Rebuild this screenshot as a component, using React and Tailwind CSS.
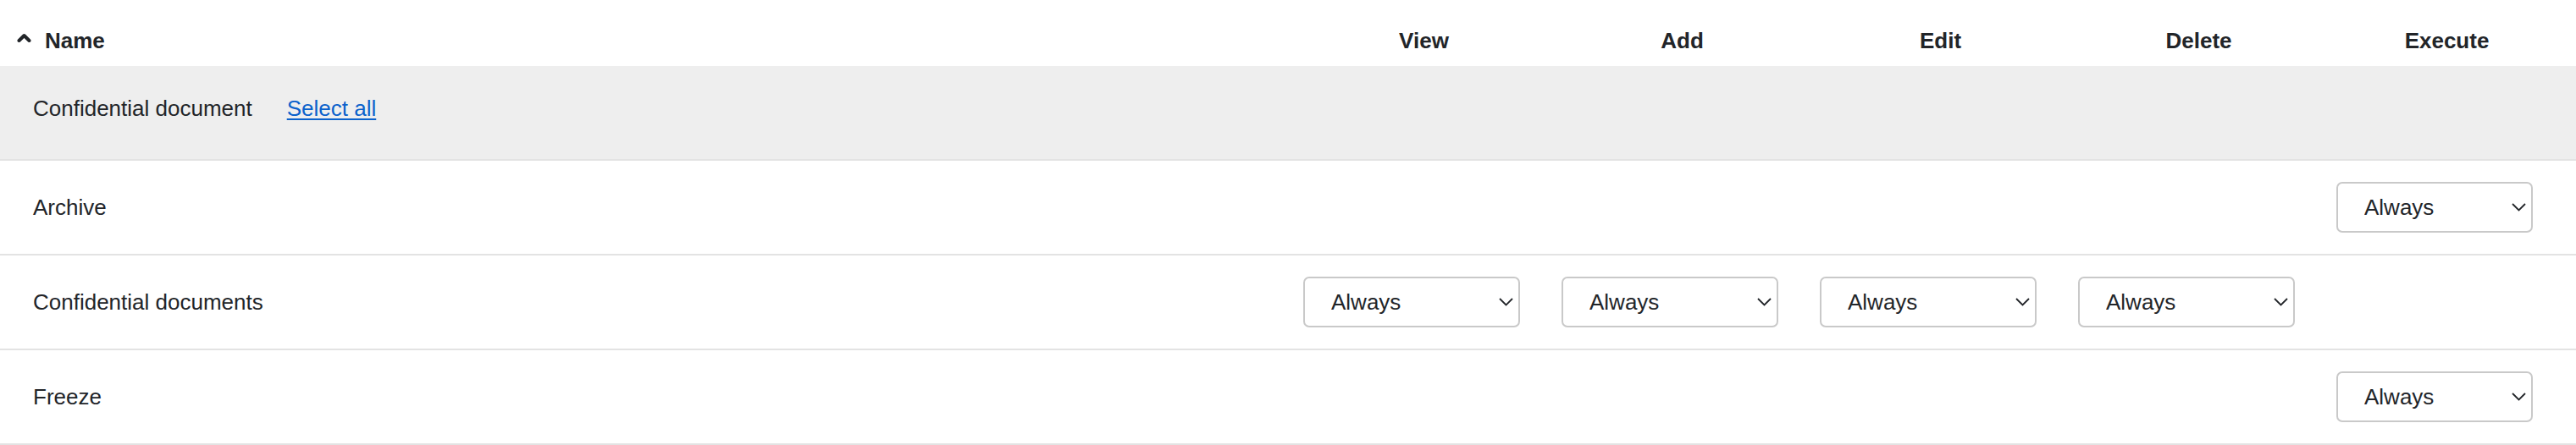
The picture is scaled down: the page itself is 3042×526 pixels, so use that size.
import { useState } from 'react';

const COLS = ['View', 'Add', 'Edit', 'Delete', 'Execute'];

const rows = [
  { name: 'Archive', perms: { Execute: 'Always' } },
  { name: 'Confidential documents', perms: { View: 'Always', Add: 'Always', Edit: 'Always', Delete: 'Always' } },
  { name: 'Freeze', perms: { Execute: 'Always' } },
];

const SortCaret = () => (
  <svg width="17" height="11" viewBox="0 0 17 11" className="mt-[6px] shrink-0">
    <polyline points="2.5,9 8.5,3 14.5,9" fill="none" stroke="#222529" strokeWidth="4" strokeLinecap="round" strokeLinejoin="round" />
  </svg>
);

const PermSelect = ({ value, wide }) => {
  const [val, setVal] = useState(value);
  return (
    <div className={`relative ml-[10px] h-[60px] ${wide ? 'w-[256px]' : 'w-[232px]'}`}>
      <select
        value={val}
        onChange={(e) => setVal(e.target.value)}
        className="h-full w-full appearance-none rounded-[7px] border-2 border-[#c9c9c9] bg-white pl-[31px] text-[26px] text-[#222529] outline-none"
      >
        <option>Always</option>
        <option>Never</option>
        <option>When owner</option>
      </select>
      <svg width="17" height="10" viewBox="0 0 17 10" className="pointer-events-none absolute right-[8px] top-[25px]">
        <polyline points="1,1 8.5,8.5 16,1" fill="none" stroke="#222529" strokeWidth="1.8" />
      </svg>
    </div>
  );
};

const gridCols = 'grid grid-cols-[1529px_305px_305px_305px_305px_281px_1fr]';

export default function App() {
  return (
    <div className="w-[3042px] bg-white text-[26px] leading-[30px] text-[#222529]" style={{ fontFamily: '"Liberation Sans", Arial, sans-serif' }}>
      {/* header */}
      <div className={`${gridCols} h-[78px] pt-[33px] font-bold`}>
        <div className="flex items-start gap-[16px] pl-[20px]">
          <SortCaret />
          <span>Name</span>
        </div>
        {COLS.map((c) => (
          <div key={c} className="text-center">{c}</div>
        ))}
        <div />
      </div>

      {/* group row */}
      <div className="flex h-[112px] items-start border-b-2 border-[#e3e3e3] bg-[#eeeeee] pl-[39px] pt-[35px]">
        <span>Confidential document</span>
        <a href="#" className="ml-[41px] text-[#0b62cc] underline decoration-[2px] underline-offset-[3px]">Select all</a>
      </div>

      {rows.map((r) => (
        <div key={r.name} className={`${gridCols} h-[112px] items-center border-b-2 border-[#e3e3e3]`}>
          <div className="pl-[39px]">{r.name}</div>
          {COLS.map((c) => (
            <div key={c}>
              {r.perms[c] ? <PermSelect value={r.perms[c]} wide={c !== 'Execute'} /> : null}
            </div>
          ))}
          <div />
        </div>
      ))}
    </div>
  );
}
